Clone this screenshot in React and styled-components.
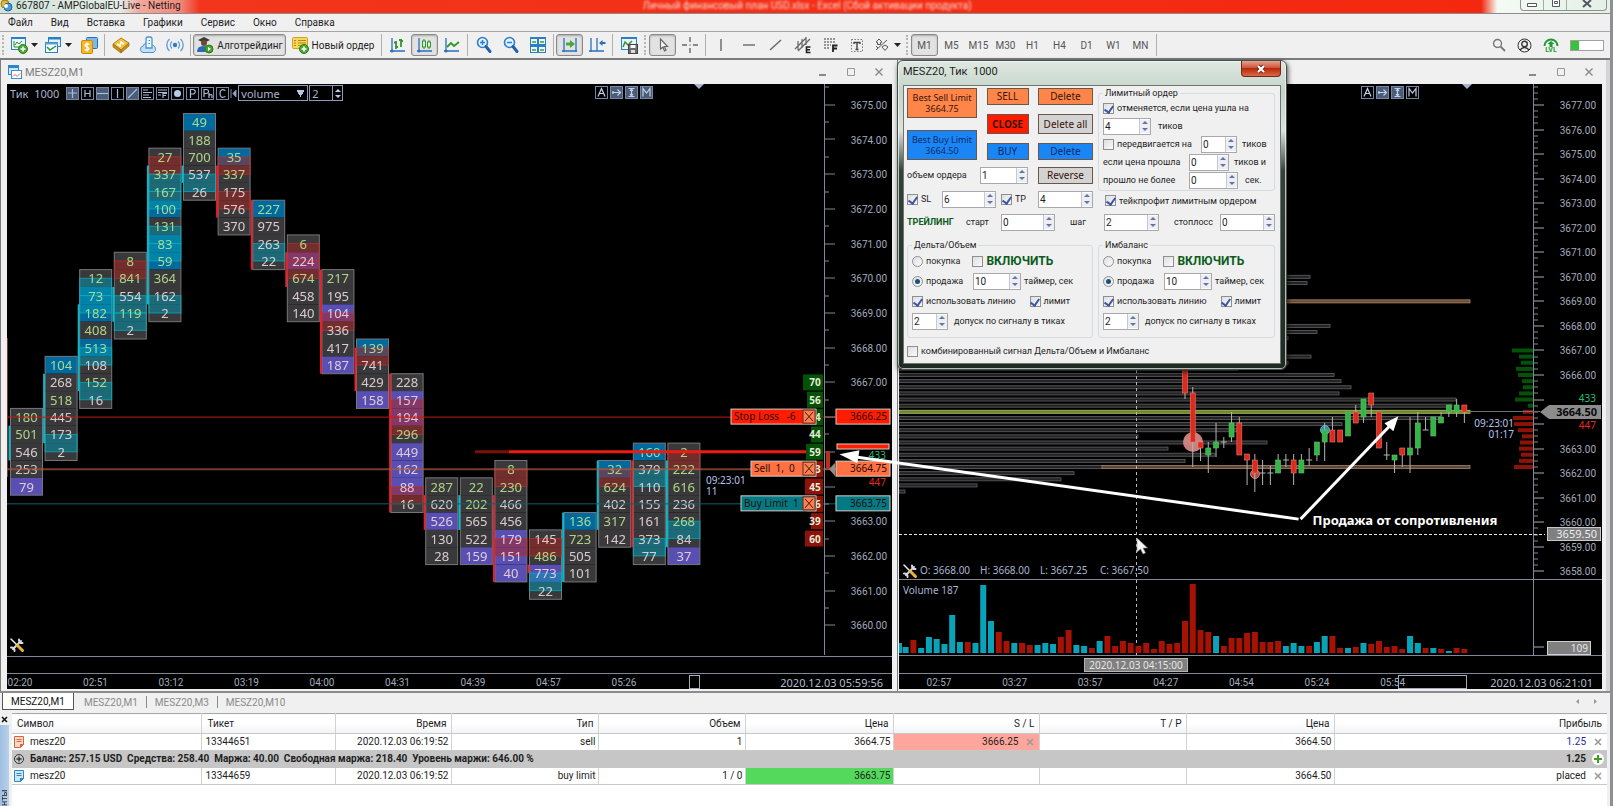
import React, { useId } from 'react';
import styled, { createGlobalStyle, css, ThemeProvider } from 'styled-components';

const theme = {
	colors: {
		chrome: '#f0f0f0',
		line: '#a6a6a6',
		axis: '#7f8799',
		axisText: '#a3abbd',
		ink: '#1e1e1e',
		orange: '#ff8548',
		blue: '#1a86f5',
		red: '#ff1c00',
		cyan: '#08a3b8',
		darkRed: '#a61204'
	},
	ui: "Roboto, 'Noto Sans', sans-serif",
	chart: "'Noto Sans', 'Open Sans', sans-serif"
};

/* ---------- chart data ---------- */

// g / w: text tone, b / p: cell fill (blue / purple), top: price of the first cell
const CLUSTERS = [
	{ top: 3666, cells: '180g 501g 546w 253w 79wp', side: ['c', 0.5, 2.5] },
	{ top: 3667.5, cells: '104gb 268w 518g 445w 173w 2w', side: ['c', 0.5, 4.5], teal: [4] },
	{ top: 3670, cells: '12g 73gb 182gb 408g 513gb 108w 152g 16w', side: ['c', 1.5, 6.5], teal: [0, 1, 4, 6] },
	{ top: 3670.5, cells: '8g 841g 554w 119g 2w', side: ['c', 1.5, 3.5], red: [0], teal: [2, 3] },
	{
		top: 3673.5,
		cells: '27g 337g 167g 100gb 131g 83gb 59gb 364g 162w 2w',
		side: ['c', 0.5, 8.5],
		red: [0],
		teal: [1, 2, 4, 5, 8]
	},
	{ top: 3674.5, cells: '49gb 188g 700g 537w 26w', side: ['c', 2.5, 3.5], teal: [3] },
	{ top: 3673.5, cells: '35gb 337g 175w 576w 370w', side: ['r', 0.5, 3.5], red: [0, 2] },
	{ top: 3672, cells: '227gb 975w 263w 22w', side: ['r', -0.5, 3.5], teal: [2] },
	{ top: 3671, cells: '6g 224wp 674g 458w 140w', side: ['r', 0.5, 2.5], red: [0, 1] },
	{ top: 3670, cells: '217g 195w 104wp 336w 417w 187wp', side: ['r', -0.5, 5.5], red: [2] },
	{ top: 3668, cells: '139gb 741w 429w 158wp', side: ['r', 0, 2.5], red: [0] },
	{ top: 3667, cells: '228w 157wp 194wp 296g 449wp 162wp 88wp 16w', side: ['r', -0.5, 7.5], red: [1, 2, 6] },
	{ top: 3664, cells: '287g 620w 526wp 130w 28w', side: ['r', 0.5, 2.5] },
	{ top: 3664, cells: '22g 202g 565w 522w 159wp', side: ['c', 0.5, 2.5] },
	{ top: 3664.5, cells: '8g 230g 466w 456w 179wp 151wp 40wp', side: ['r', 1.5, 6.5], red: [0, 4] },
	{ top: 3662.5, cells: '145w 486g 773wp 22w', side: ['r', 1.5, 2], red: [0], teal: [2] },
	{ top: 3663, cells: '136gb 723g 505w 101w', side: ['c', -0.5, 3.5] },
	{ top: 3664.5, cells: '32gb 624g 402w 317g 142w', side: ['c', -0.5, 3.5], red: [0] },
	{ top: 3665, cells: '160gb 379w 110w 155w 161w 373w 77w', side: ['r', 0.5, 5.5], teal: [1, 5] },
	{ top: 3665, cells: '2g 222g 616g 236w 268g 84w 37wp', side: ['c', 0.5, 5.5], red: [0], teal: [4] }
];

// price, volume, bar width
const LADDER = [
	[3667, 70, 20],
	[3666.5, 56, 16],
	[3666, 44, 13],
	[3665.5, 44, 12],
	[3665, 59, 17],
	[3664.5, 43, 13],
	[3664, 45, 18],
	[3663.5, 46, 16],
	[3663, 39, 12],
	[3662.5, 60, 18]
];

// row offset from 3666.00 in quarter points, right edge
const PROFILE = [
	[-16, 411], [-15, 408], [-8, 431], [-7, 418], [-6, 389], [-3, 412], [-2, 389], [-1, 339],
	[0, 435], [1, 442], [2, 452], [3, 440], [4, 557], [5, 553], [7, 541], [8, 443], [9, 338],
	[10, 239], [11, 368], [12, 269], [13, 316], [14, 286], [15, 204], [16, 175], [17, 162], [18, 78], [19, 6]
];

const DEPTH = [21, 14, 12, 17, 15, 11, 10, 14, 18, 5, 10, 20, 19, 15, 11, 13, 14, 12, 14, 19];

// kind, body top, body bottom, wick top, wick bottom
const CANDLES = [
	['r', 280, 309, 280, 315], ['r', 309, 358, 303, 383], ['r', 358, 364, 358, 377], ['g', 364, 371, 358, 389],
	['g', 358, 364, 339, 373], ['x', 358, 358, 353, 364], ['g', 339, 353, 328, 358], ['r', 339, 371, 333, 371],
	['r', 370, 376, 370, 401], ['r', 376, 389, 370, 408], ['x', 389, 389, 376, 401], ['x', 389, 389, 382, 401],
	['g', 376, 389, 370, 389], ['x', 376, 376, 370, 383], ['r', 376, 389, 370, 401], ['g', 376, 389, 370, 389],
	['x', 376, 376, 364, 382], ['g', 358, 371, 358, 377], ['g', 346, 358, 339, 377], ['r', 346, 358, 333, 358],
	['r', 346, 358, 346, 358], ['g', 328, 352, 328, 352], ['r', 328, 339, 321, 339], ['g', 315, 333, 315, 339],
	['r', 309, 321, 309, 333], ['r', 328, 364, 328, 364], ['x', 371, 371, 358, 376], ['g', 371, 376, 371, 389],
	['r', 364, 371, 364, 383], ['g', 364, 371, 333, 389], ['g', 339, 364, 328, 371], ['x', 346, 346, 333, 346],
	['g', 333, 352, 333, 352], ['g', 333, 339, 328, 339], ['g', 321, 328, 321, 333], ['g', 321, 328, 315, 333],
	['r', 321, 328, 321, 339]
];

const VOLUME =
	'10c 6c 13r 5c 16c 14c 9c 38c 11c 11r 10c 68c 32c 21r 12r 10c 10r 8r 8c 10c 9c 16r 23r 8c 7c 5r 12c 17r 7r 12r 10r 7r 10r 4r 12r 9r 10r 32r 69r 23r 21r 17c 7r 15r 15r 20r 21r 11r 11r 12r 7c 10c 7c 7r 11c 17c 17r 5r 5c 6r 10c 9r 12r 6r 7r 4r 17c 10c 5r 5c 4r 2c 5r 4r';

const range = (from, to) => Array.from({ length: to - from + 1 }, (_, i) => from + i);

/* ---------- charts ---------- */

const STEP = 34.7;
const leftY = (price) => 298.4 + (3667 - price) * STEP;

function Cluster({ index, top, cells, side, red = [], teal = [] }) {
	const x = 3.5 + 34.6 * index;
	const h = STEP / 2;
	const y = leftY(top);
	const list = cells.split(' ');
	const fills = { b: '#006a9e', p: '#594fb2' };
	return (
		<g>
			{list.map((c, i) => (
				<rect key={i} x={x} y={y - h / 2 + i * h} width="32" height={h} fill={fills[c[c.length - 1]] || '#39393b'} />
			))}
			<rect x={x} y={y - h / 2} width="32" height={h * list.length} fill="none" stroke="#77777a" />
			{red.map((r) => (
				<rect key={r} x={x} y={y + r * h} width="32" height={h} fill="rgba(172,34,32,.5)" stroke="rgba(190,50,50,.7)" />
			))}
			{teal.map((r) => (
				<rect key={r} x={x} y={y + r * h} width="32" height={h} fill="rgba(0,154,180,.5)" stroke="rgba(0,180,195,.7)" />
			))}
			{list.map((c, i) => (
				<CellText key={i} x={x + 16} y={y + i * h + 5} $green={c.includes('g')}>
					{parseInt(c, 10)}
				</CellText>
			))}
			<rect x={x - 2} y={y + side[1] * h} width="2" height={(side[2] - side[1]) * h} fill={side[0] === 'c' ? '#12b4c6' : '#e3232f'} />
		</g>
	);
}

// row is the cluster row the tag sits on, price is the order price
function OrderLabel({ x, row, price, text, fill }) {
	const y = leftY(row);
	return (
		<g>
			<rect x={x} y={y - 8} width={809 - x} height="15" fill={fill} stroke="#d6cfcb" />
			<rect x="796" y={y - 7} width="12" height="13" fill="#ff7f50" stroke="#5a2a1a" />
			<path d={`M798 ${y - 5}l8 9m0 -9l-8 9`} stroke="#3a1a10" />
			<OrderText x={x + 3} y={y + 3}>{text}</OrderText>
			<rect x="829" y={y - 8} width="54" height="15" fill={fill} stroke="#d6cfcb" />
			<OrderText x="880" y={y + 3} textAnchor="end">{price.toFixed(2)}</OrderText>
		</g>
	);
}

function Wrench({ x, y }) {
	return (
		<g transform={`translate(${x} ${y})`} fill="none" strokeLinecap="round">
			<path d="M3 11L11 3" stroke="#d8dde2" strokeWidth="2" />
			<path d="M9 1.5a3 3 0 0 0 3.5 3.5M1 9.5a3 3 0 0 1 3.5 3.5" stroke="#d8dde2" strokeWidth="2" />
			<path d="M1 1l6 6" stroke="#e9edf0" strokeWidth="1.5" />
			<path d="M7.5 7.5l5 5" stroke="#e9b23c" strokeWidth="3" />
		</g>
	);
}

function LeftChart() {
	const times = ['02:20', '02:51', '03:12', '03:19', '04:00', '04:31', '04:39', '04:57', '05:26'];
	return (
		<Plot viewBox="0 0 885 605">
			<rect x="0" y="254" width="1" height="139" fill="#6e3a3a" />
			<path d="M687 0h10l-5 5z" fill="#a8b4d0" />
			{CLUSTERS.map((c, i) => (
				<Cluster key={i} index={i} {...c} />
			))}
			<path d={`M0 ${leftY(3666)}H829`} stroke="#c01c14" />
			<path d={`M0 ${leftY(3664.5)}H829`} stroke="#a8583f" strokeWidth="2" opacity=".7" />
			<path d={`M0 ${leftY(3663.5)}H829`} stroke="#126066" />
			<path d={`M468 ${leftY(3665)}H502`} stroke="#7c1008" strokeWidth="3" />
			<path d={`M502 ${leftY(3665)}H815`} stroke="#ee1c10" strokeWidth="3" />
			{LADDER.map(([p, n, w]) => (
				<g key={p}>
					<rect x={816 - w} y={leftY(p) - 8} width={w} height="16" fill={p >= 3665 ? '#045204' : '#8e1206'} />
					<LadderText x="808" y={leftY(p) + 4}>{n}</LadderText>
				</g>
			))}
			<path d="M817.5 0V571" stroke={theme.colors.axis} />
			{range(3660, 3675).map((p) => (
				<path key={p} d={`M818 ${Math.round(leftY(p))}h10M818 ${Math.round(leftY(p + 0.5))}h4`} stroke={theme.colors.axis} />
			))}
			{range(3660, 3675)
				.filter((p) => ![3664, 3665, 3666].includes(p))
				.map((p) => (
					<AxisText key={p} x="880" y={leftY(p) + 4} textAnchor="end">
						{p.toFixed(2)}
					</AxisText>
				))}
			<rect x="830" y="360" width="52" height="5" fill={theme.colors.red} stroke="#d6cfcb" />
			<SmallText x="879" y="375" textAnchor="end" fill="#1fbf74">433</SmallText>
			<SmallText x="879" y="402" textAnchor="end" fill="#e02a20">447</SmallText>
			<path d="M819 367h4v18h-4z" fill="#b8301c" />
			<path d="M822 385l6 -6v13z" fill="#9a8a86" />
			<OrderLabel x={724} row={3666} price={3666.25} text="Stop Loss   -6" fill={theme.colors.red} />
			<OrderLabel x={744} row={3664.5} price={3664.75} text="Sell  1,  0" fill="#ff7043" />
			<OrderLabel x={734} row={3663.5} price={3663.75} text="Buy Limit  1" fill="#027a84" />
			<SmallText x="699" y="400" fill="#b4c6ea">09:23:01</SmallText>
			<SmallText x="699" y="411" fill="#b4c6ea">11</SmallText>
			<Wrench x={3} y={554} />
			<path d="M0 572.5H885M0 589.5H885" stroke={theme.colors.axis} />
			{times.map((t, i) => (
				<AxisText key={t} x={13 + 75.5 * i} y="602" textAnchor="middle">{t}</AxisText>
			))}
			<rect x="682.5" y="591.5" width="10" height="13" fill="none" stroke={theme.colors.axisText} />
			<DateText x="876" y="603" textAnchor="end">2020.12.03 05:59:56</DateText>
		</Plot>
	);
}

const Q = 6.135;
const rightY = (price) => 291 + (3666 - price) * Q * 4;

function Candle({ k, data: [kind, top, bottom, wickTop, wickBottom] }) {
	const x = 286 + 7.76 * k;
	return (
		<g>
			<path d={`M${x} ${wickTop}V${wickBottom}`} stroke="#b4b4b4" />
			{kind === 'x' ? (
				<path d={`M${x - 3} ${top}h6`} stroke="#b4b4b4" />
			) : (
				<rect
					x={x - 2.5}
					y={top}
					width="5"
					height={bottom - top}
					fill={kind === 'g' ? '#35b548' : '#dc2a1c'}
					stroke={kind === 'g' ? '#5ec46a' : '#ee7a6c'}
					strokeWidth=".6"
				/>
			)}
		</g>
	);
}

function RightChart() {
	const times = ['02:57', '03:27', '03:57', '04:27', '04:54', '05:24', '05:54'];
	const ohlc = ['O: 3668.00', 'H: 3668.00', 'L: 3667.25', 'C: 3667.50'];
	return (
		<Plot viewBox="0 0 703 605">
			<path d="M563 0h10l-5 5z" fill="#a8b4d0" />
			{PROFILE.map(([row, w]) => (
				<rect key={row} x="0" y={289.5 + row * Q} width={w} height="3" fill="#232325" stroke="#58585a" strokeWidth=".9" />
			))}
			<rect x="0" y={291 - 12 * Q - 1.5} width="571" height="3" fill="#6a4a33" stroke="#b5906f" strokeWidth=".8" />
			<rect x="0" y={291 + 6 * Q - 1.5} width="571" height="3" fill="#6c8238" stroke="#a3bd58" strokeWidth=".9" />
			<rect x="203" y={291 + 15 * Q - 1.5} width="368" height="3" fill="#5c4636" stroke="#957b66" strokeWidth=".9" />
			<circle cx="294" cy="358" r="10" fill="#dc8f8c" opacity=".9" />
			<circle cx="356" cy="390" r="4.5" fill="#a8504a" stroke="#d27a74" />
			<circle cx="426" cy="346" r="4.5" fill="#2f8fa3" stroke="#62b6c6" />
			{CANDLES.map((c, k) => (
				<Candle key={k} k={k} data={c} />
			))}
			{DEPTH.map((w, i) => (
				<rect key={i} x={634 - w} y={289 + (i - 4) * Q} width={w} height="4" fill={i < 10 ? '#04520a' : '#8e1206'} />
			))}
			<path d="M634.5 0V571" stroke={theme.colors.axis} />
			{range(3658, 3677).map((p) => (
				<g key={p}>
					<path d={`M635 ${Math.round(rightY(p))}h10`} stroke={theme.colors.axisText} />
					{[0.25, 0.5, 0.75].map((d) => (
						<path key={d} d={`M635 ${Math.round(rightY(p + d))}h4`} stroke={theme.colors.axis} />
					))}
					{p !== 3664 && p !== 3665 && (
						<AxisText x="697" y={rightY(p) + 4} textAnchor="end">{p.toFixed(2)}</AxisText>
					)}
				</g>
			))}
			<path d="M571 327.5H641" stroke="#6d7078" />
			<path d="M641 328l9 -7H702v14H650z" fill="#8c8c8c" />
			<TagText x="698" y="332" textAnchor="end">3664.50</TagText>
			<SmallText x="697" y="318" textAnchor="end" fill="#1fbf74">433</SmallText>
			<SmallText x="697" y="345" textAnchor="end" fill="#e02a20">447</SmallText>
			<SmallText x="615" y="343" textAnchor="end" fill="#b4c6ea">09:23:01</SmallText>
			<SmallText x="615" y="354" textAnchor="end" fill="#b4c6ea">01:17</SmallText>
			<path d="M0 450.5H646" stroke="#e8e8e8" strokeDasharray="3 2" />
			<path d="M237.5 280V571" stroke="#b8b8b8" strokeDasharray="3 3" />
			<rect x="648.5" y="443.5" width="53" height="13" fill="#808080" stroke="#c8c8c8" />
			<TagText x="698" y="454" textAnchor="end" $light>3659.50</TagText>
			<path d="M238 454v14l3.5 -3l2.5 5l2.5 -1.2l-2.5 -4.8h4.5z" fill="#f4f4f4" stroke="#888" strokeWidth=".6" />
			<Wrench x={4} y={480} />
			{ohlc.map((t, i) => (
				<SmallText key={t} x={21 + 60 * i} y="490" fill="#a9b6d2">{t}</SmallText>
			))}
			<path d="M0 495.5H703M0 571.5H703M0 589.5H703" stroke={theme.colors.axis} />
			<SmallText x="4" y="510" fill="#a9b6d2">Volume 187</SmallText>
			{VOLUME.split(' ').map((v, i) => {
				const h = parseInt(v, 10);
				return (
					<rect key={i} x={Math.max(0, 286 + 7.76 * (i - 37) - 3)} y={569 - h} width={i ? 6 : 3} height={h} fill={v.endsWith('c') ? theme.colors.cyan : theme.colors.darkRed} />
				);
			})}
			<path d="M635 563h10" stroke={theme.colors.axisText} />
			<rect x="648.5" y="557.5" width="43" height="13" fill="#808080" stroke="#d0d0d0" />
			<SmallText x="689" y="568" textAnchor="end" fill="#e6e6e6">109</SmallText>
			<rect x="185.5" y="574.5" width="103" height="13" fill="#808080" stroke="#b4b4b4" />
			<SmallText x="237" y="585" textAnchor="middle" fill="#e6e6e6">2020.12.03 04:15:00</SmallText>
			{times.map((t, i) => (
				<AxisText key={t} x={40 + 75.6 * i} y="602" textAnchor="middle">{t}</AxisText>
			))}
			<rect x="499.5" y="591.5" width="68" height="13" fill="none" stroke={theme.colors.axisText} />
			<DateText x="694" y="603" textAnchor="end">2020.12.03 06:21:01</DateText>
		</Plot>
	);
}

const MODES = [
	['A', 'Auto', <path d="M3 10.500L6.500 2.500L10 10.500M4.500 7.500h4" />],
	['S', 'Shift', <path d="M2 6.500h8M7.500 3.500l3 3l-3 3M3 5v3" />],
	['I', 'Scale', <path d="M6.500 3v7M3.500 2.500h6M3.500 10.500h6M5 5l1.500 -2l1.500 2M5 8l1.500 2l1.500 -2" />],
	['M', 'Magnet', <path d="M3 10.500V2.500L6.500 7L10 2.500v8" />]
];

function ModeButtons({ right, on }) {
	return (
		<Modes $right={right}>
			{MODES.map(([m, title, glyph]) => (
				<MiniButton key={m} aria-label={title} $on={on.includes(m)}>
					<svg width="11" height="11" viewBox="1 1 11 11" fill="none" stroke="#c3cfe4" strokeWidth="1.2">{glyph}</svg>
				</MiniButton>
			))}
		</Modes>
	);
}

function ChartWindow({ children, title }) {
	return (
		<Window>
			<WindowBar>
				<svg width="14" height="14" viewBox="0 0 14 14">
					<rect x=".5" y=".5" width="10" height="9" fill="#cfe6f8" stroke="#2c86cc" />
					<path d="M0 1.500h11" stroke="#2c86cc" strokeWidth="3" />
					<rect x="3.500" y="5.500" width="10" height="8" fill="#fff" stroke="#3d8fd0" />
					<path d="M5 11.500l2 -2l2 2l3 -3" fill="none" stroke="#e2663a" />
				</svg>
				<span>{title}</span>
				<WindowTools>
					<button aria-label="Свернуть"><svg width="10" height="10"><path d="M1 8h7" stroke="#888" strokeWidth="2" /></svg></button>
					<button aria-label="Развернуть"><svg width="10" height="10"><path d="M1.500 1.500h7v7h-7z" fill="none" stroke="#999" /></svg></button>
					<button aria-label="Закрыть"><svg width="10" height="10"><path d="M1.500 1.500l7 7m0 -7l-7 7" stroke="#888" strokeWidth="1.400" /></svg></button>
				</WindowTools>
			</WindowBar>
			<Canvas>{children}</Canvas>
		</Window>
	);
}

function ChartTools() {
	const items = [
		['cross', 'M2 6h9M6.500 2v9', true],
		['h', 'M4 3v7M9 3v7M4 6.500h5'],
		['hline', 'M1 6.500h11', true],
		['vline', 'M6.500 2v9'],
		['trend', 'M2 11L11 2', true],
		['levels', 'M2 3h5M2 5.500h9M2 8h6M2 10.500h8'],
		['fibo', 'M2 3h9M2 5.500h9M2 8h3M7 11V6.500h4M7 8.500h3'],
		['dot', ''],
		['p', 'M4.500 11V2.500h2.500a2 2 0 0 1 0 4.500h-2.500'],
		['ph', 'M3 10V2.500h2.500a2 2 0 0 1 0 4h-2.500M8 6v5M8 8.500q3 -2 3 0v2.500'],
		['c', 'M9.500 3.500Q4 1 4 6.500T9.500 9.500']
	];
	return (
		<Tools>
			<span>Тик  1000</span>
			<MiniGroup>
				{items.map(([id, d, on]) => (
					<MiniButton key={id} aria-label={id} $on={on}>
						<svg width="11" height="11" viewBox="1 1 11 11">
							{id === 'dot' ? <circle cx="6.500" cy="6.500" r="3.500" fill="#bccbe4" /> : <path d={d} fill="none" stroke="#a9bbd8" strokeWidth="1.200" />}
						</svg>
					</MiniButton>
				))}
			</MiniGroup>
			<svg width="7" height="13"><path d="M1 2v9M6 3L3 6.500L6 10z" stroke="#7d8ba6" fill="#a9bbd8" /></svg>
			<ModeSelect aria-label="Режим" defaultValue="volume">
				<option>volume</option>
			</ModeSelect>
			<Stepper>
				<input aria-label="Шаг" defaultValue="2" />
				<Spin $dark><button aria-label="Больше" /><button aria-label="Меньше" /></Spin>
			</Stepper>
		</Tools>
	);
}

/* ---------- order dialog ---------- */

function NumberField({ value, w, label, id }) {
	return (
		<Field $w={w}>
			<input id={id} aria-label={label} defaultValue={value} />
			<Spin><button aria-label="Больше" /><button aria-label="Меньше" /></Spin>
		</Field>
	);
}

function Check({ children, on, type = 'checkbox', name, big }) {
	const id = useId();
	return (
		<CheckWrap>
			<Tick id={id} type={type} name={name} defaultChecked={on} />
			<CheckLabel htmlFor={id} $big={big}>{children}</CheckLabel>
		</CheckWrap>
	);
}

function SignalGroup({ title }) {
	return (
		<Group $tall>
			<legend>{title}</legend>
			<Row $h={20} $gap={12}>
				<Check type="radio" name={title}>покупка</Check>
				<Check big>ВКЛЮЧИТЬ</Check>
			</Row>
			<Row $h={20} $gap={3}>
				<RadioSlot><Check type="radio" name={title} on>продажа</Check></RadioSlot>
				<NumberField value="10" w={48} label="Таймер" />
				<span>таймер, сек</span>
			</Row>
			<Row $h={20} $gap={14}>
				<Check on>использовать линию</Check>
				<Check on>лимит</Check>
			</Row>
			<Row $h={20} $gap={6}>
				<NumberField value="2" w={36} label="Допуск" />
				<span>допуск по сигналу в тиках</span>
			</Row>
		</Group>
	);
}

function OrderDialog() {
	return (
		<Dialog>
			<DialogBar>
				<span>MESZ20, Тик  1000</span>
				<CloseButton aria-label="Закрыть">
					<svg width="12" height="10"><path d="M3 2l6 6m0 -6l-6 6" stroke="#6a2a20" strokeWidth="4" /><path d="M3 2l6 6m0 -6l-6 6" stroke="#fff" strokeWidth="2.200" /></svg>
				</CloseButton>
			</DialogBar>
			<Client>
				<Pair>
					<Stack $gap={6}>
						<Orders>
							<OrderColumn $w={70}>
								<OrderButton $h={30} $tone="orange">Best Sell Limit<br />3664.75</OrderButton>
								<OrderButton $h={30} $tone="blue">Best Buy Limit<br />3664.50</OrderButton>
							</OrderColumn>
							<OrderColumn $w={42}>
								<OrderButton $tone="orange">SELL</OrderButton>
								<OrderButton $h={20} $tone="red">CLOSE</OrderButton>
								<OrderButton $tone="blue">BUY</OrderButton>
							</OrderColumn>
							<OrderColumn $w={55}>
								<OrderButton $tone="orange">Delete</OrderButton>
								<OrderButton $h={20}>Delete all</OrderButton>
								<OrderButton $tone="blue">Delete</OrderButton>
							</OrderColumn>
						</Orders>
						<Row $h={18} $gap={10}>
							<Spread $w={121}>
								<label htmlFor="volume">объем ордера</label>
								<NumberField id="volume" value="1" w={48} />
							</Spread>
							<OrderButton $w={55}>Reverse</OrderButton>
						</Row>
						<Row $h={18} $gap={5}>
							<Spread $w={89}>
								<Check on>SL</Check>
								<NumberField value="6" w={54} label="SL" />
							</Spread>
							<Spread $w={92}>
								<Check on>TP</Check>
								<NumberField value="4" w={55} label="TP" />
							</Spread>
						</Row>
					</Stack>
					<Stack $gap={1}>
						<Group>
							<legend>Лимитный ордер</legend>
							<Row $h={18}><Check on>отменяется, если цена ушла на</Check></Row>
							<Row $h={18} $gap={7}>
								<NumberField value="4" w={48} label="Отмена, тиков" />
								<span>тиков</span>
							</Row>
							<Row $h={18} $gap={5}>
								<Spread $w={134}>
									<Check>передвигается на</Check>
									<NumberField value="0" w={36} label="Сдвиг" />
								</Spread>
								<span>тиков</span>
							</Row>
							<Row $h={18} $gap={5}>
								<Spread $w={126}>
									<label htmlFor="passed">если цена прошла</label>
									<NumberField id="passed" value="0" w={40} />
								</Spread>
								<span>тиков и</span>
							</Row>
							<Row $h={18} $gap={7}>
								<Spread $w={135}>
									<label htmlFor="limit">прошло не более</label>
									<NumberField id="limit" value="0" w={49} />
								</Spread>
								<span>сек.</span>
							</Row>
						</Group>
						<Indent $h={17}><Check on>тейкпрофит лимитным ордером</Check></Indent>
					</Stack>
				</Pair>
				<Row $h={18} $gap={15}>
					<Spread $w={148}>
						<Trailing>ТРЕЙЛИНГ</Trailing>
						<label htmlFor="start">старт</label>
						<NumberField id="start" value="0" w={54} />
					</Spread>
					<Spread $w={89}>
						<label htmlFor="step">шаг</label>
						<NumberField id="step" value="2" w={55} />
					</Spread>
					<Spread $w={101}>
						<label htmlFor="stop">стоплосс</label>
						<NumberField id="stop" value="0" w={55} />
					</Spread>
				</Row>
				<Pair $top={5}>
					<SignalGroup title="Дельта/Объем" />
					<SignalGroup title="Имбаланс" />
				</Pair>
				<Row $h={18}><Check>комбинированный сигнал Дельта/Объем и Имбаланс</Check></Row>
			</Client>
		</Dialog>
	);
}

/* ---------- toolbar ---------- */

const ICONS = {
	newChart: (
		<>
			<rect x="1.500" y="1.500" width="14" height="12" fill="#eaf5fd" stroke="#2b7fc4" />
			<path d="M1 2h15" stroke="#2b7fc4" strokeWidth="2" />
			<path d="M4 5v6h9M5 9l2 -3l2 2l3 -3" fill="none" stroke="#2f8f2f" />
			<circle cx="13" cy="13" r="4.500" fill="#4aa82e" stroke="#2b7d18" />
			<path d="M10.500 13h5M13 10.500v5" stroke="#fff" strokeWidth="1.600" />
		</>
	),
	profiles: (
		<>
			<rect x="4.500" y="1.500" width="12" height="9" fill="#e4f2fc" stroke="#2b7fc4" />
			<path d="M4 2.500h13" stroke="#2b7fc4" strokeWidth="2" />
			<rect x="1.500" y="6.500" width="12" height="10" fill="#f2fafe" stroke="#2b7fc4" />
			<path d="M1 7.500h13" stroke="#58a5de" strokeWidth="2" />
			<path d="M3 11l3 3l6 -4" fill="none" stroke="#2f9a2f" strokeWidth="1.500" />
		</>
	),
	market: (
		<>
			<rect x="6.500" y="1.500" width="11" height="11" rx="1" fill="#7db8ea" stroke="#2670b8" />
			<rect x="1.500" y="4.500" width="11" height="13" rx="1" fill="#f5b727" stroke="#c98a0c" />
			<path d="M9.500 8.500q-2.500 -1.500 -4 0t1.500 2.500t1.500 2.500t-4 0M7 6.500v9" fill="none" stroke="#fff" strokeWidth="1.300" />
		</>
	),
	book: (
		<>
			<path d="M1 8l8 -6l8 5l-8 7z" fill="#f3c340" stroke="#b27f14" />
			<path d="M1 8v3l8 6v-3zM9 14v3l8 -7V7z" fill="#c98c1c" stroke="#9c6d10" strokeWidth=".7" />
			<path d="M5 8l3 2l1 -4l3 2" fill="none" stroke="#fff" strokeWidth="1.600" />
		</>
	),
	cloud: (
		<>
			<path d="M4 16.500a3.200 3.200 0 0 1 0 -6.300a4 4 0 0 1 7.500 -.7a3.500 3.500 0 0 1 2.500 7z" fill="#c5e0f6" stroke="#4b93d4" />
			<path d="M7 12V3a2 2 0 0 1 2 -2h2a2 2 0 0 1 2 2v9z" fill="#eef6fd" stroke="#4b93d4" strokeWidth="1.300" />
			<path d="M9.500 4.500h1.500M9.500 7.500h1.500" stroke="#4b93d4" />
		</>
	),
	signal: (
		<>
			<circle cx="9" cy="9" r="2.200" fill="#2f78cc" />
			<path d="M6 5.500a5 5 0 0 0 0 7M12 5.500a5 5 0 0 1 0 7M3.500 3a8 8 0 0 0 0 12M14.500 3a8 8 0 0 1 0 12" fill="none" stroke="#62a0dc" strokeWidth="1.400" />
		</>
	),
	algo: (
		<>
			<path d="M2 4l6 -3l6 3l-6 3z" fill="#3a3a3a" />
			<circle cx="8" cy="7" r="3" fill="#6b4a32" />
			<path d="M1 16q0 -6 6 -6t6 6z" fill="#2a6ab6" />
			<circle cx="13" cy="13" r="4" fill="#42a52a" stroke="#2b7d18" />
			<path d="M12 11v4l3 -2z" fill="#fff" />
		</>
	),
	order: (
		<>
			<rect x="1.500" y="1.500" width="15" height="11" rx="1" fill="#f7d65c" stroke="#d49f1e" />
			<path d="M3 4.500h2M3 7h2M3 9.500h2M7 4.500h8M7 7h8M7 9.500h5" stroke="#b98715" />
			<circle cx="13" cy="13" r="4.500" fill="#4aa82e" stroke="#2b7d18" />
			<path d="M10.500 13h5M13 10.500v5" stroke="#fff" strokeWidth="1.600" />
		</>
	),
	bars: (
		<>
			<path d="M3 2v14M1 15h15" stroke="#2a6fc0" strokeWidth="1.300" />
			<circle cx="3" cy="15" r="1.500" fill="#2a6fc0" />
			<path d="M7 5v8M5 6.500h2M12 3v8M10 4h2M12 5h2M7 11h2" stroke="#31952b" strokeWidth="1.800" />
		</>
	),
	candles: (
		<>
			<path d="M3 2v14M1 15h15" stroke="#2a6fc0" strokeWidth="1.300" />
			<circle cx="3" cy="15" r="1.500" fill="#2a6fc0" />
			<path d="M8 3v10M13 4v9" stroke="#31952b" />
			<rect x="6.500" y="5" width="3" height="6" fill="#dff0da" stroke="#31952b" />
			<rect x="11.500" y="6" width="3" height="5" fill="#dff0da" stroke="#31952b" />
		</>
	),
	line: (
		<>
			<path d="M3 2v14M1 15h15" stroke="#2a6fc0" strokeWidth="1.300" />
			<circle cx="3" cy="15" r="1.500" fill="#2a6fc0" />
			<path d="M4 11l4 -4l3 3l5 -4" fill="none" stroke="#31952b" strokeWidth="1.800" />
		</>
	),
	zoomIn: (
		<>
			<circle cx="7.500" cy="6.500" r="5" fill="#e3f1fc" stroke="#2f7ecb" strokeWidth="1.600" />
			<path d="M5 6.500h5M7.500 4v5" stroke="#2f7ecb" strokeWidth="1.500" />
			<path d="M11 10.500l4 5" stroke="#2560a4" strokeWidth="3" strokeLinecap="round" />
		</>
	),
	zoomOut: (
		<>
			<circle cx="7.500" cy="6.500" r="5" fill="#e3f1fc" stroke="#2f7ecb" strokeWidth="1.600" />
			<path d="M5 6.500h5" stroke="#2f7ecb" strokeWidth="1.500" />
			<path d="M11 10.500l4 5" stroke="#2560a4" strokeWidth="3" strokeLinecap="round" />
		</>
	),
	tile: (
		<>
			{[[1, 1], [9, 1], [1, 9], [9, 9]].map(([x, y]) => (
				<g key={`${x}${y}`}>
					<rect x={x + 0.5} y={y + 0.5} width="7" height="7" fill="#eef7fd" stroke="#2b7fc4" />
					<path d={`M${x} ${y + 1}h8`} stroke="#2b7fc4" strokeWidth="2" />
					<path d={`M${x + 2} ${y + 5}h4`} stroke="#31952b" strokeWidth="1.400" />
				</g>
			))}
		</>
	),
	scroll: (
		<>
			<path d="M3 2v14M1 15h15M15 2v14" stroke="#2a6fc0" strokeWidth="1.300" />
			<path d="M5 6.500h4V4l5 4l-5 4V9.500h-4z" fill="#49a936" />
		</>
	),
	shift: (
		<>
			<path d="M3 2v14M1 15h15M9 2v13" stroke="#2a6fc0" strokeWidth="1.300" />
			<path d="M11 7l3.500 -3v2h3v2h-3v2z" fill="#2a6fc0" />
		</>
	),
	template: (
		<>
			<rect x="1.500" y="1.500" width="15" height="12" fill="#eaf5fd" stroke="#2b7fc4" />
			<path d="M1 2h16" stroke="#2b7fc4" strokeWidth="2" />
			<path d="M3 11l2 -5l3 3l4 -4" fill="none" stroke="#31952b" strokeWidth="1.500" />
			<rect x="8.500" y="8.500" width="9" height="9" fill="#6c6c70" stroke="#444" />
			<path d="M10.500 9v3h5v-3z" fill="#fff" />
			<path d="M11 17v-3h4v3z" fill="#ddd" />
		</>
	),
	cursor: <path d="M6.500 3v10l2.500 -2l1.500 4l1.500 -.7l-1.500 -3.800h3z" fill="#fff" stroke="#666" strokeWidth="1.200" />,
	crosshair: <path d="M9 1v5M9 12v5M1 9h5M12 9h5M8.500 9h1" stroke="#666" strokeWidth="1.400" />,
	vline: <path d="M8 3v12" stroke="#666" strokeWidth="1.400" />,
	hline: <path d="M3 9h12" stroke="#666" strokeWidth="1.400" />,
	trend: <path d="M3 14L14 4" stroke="#666" strokeWidth="1.400" />,
	channel: (
		<>
			<path d="M1 13L12 2M4 15L16 3M4 5v9M8 3v9M12 1v8" fill="none" stroke="#666" strokeWidth="1.200" />
			<path d="M16.500 11h-4v5.500h4M12.500 13.700h3.500" fill="none" stroke="#222" strokeWidth="1.600" />
		</>
	),
	fibo: (
		<>
			<path d="M3 3h12M3 6h12M3 9h7M3 12h6" stroke="#777" strokeWidth="1.500" strokeDasharray="2 1" />
			<path d="M12 16V9.500h4.500M12 12.500h4" fill="none" stroke="#222" strokeWidth="1.800" />
		</>
	),
	text: (
		<>
			<rect x="3.500" y="3.500" width="11" height="12" fill="none" stroke="#777" strokeDasharray="1.500 1.500" />
			<path d="M6 6.500h6M9 6.500v7M7.500 13.500h3M6 6v2M12 6v2" stroke="#444" strokeWidth="1.400" />
		</>
	),
	objects: (
		<>
			<path d="M3 6l3 -3l3 3l-1.500 .5v2h-3v-2z" fill="none" stroke="#555" />
			<path d="M3 14L14 4" stroke="#555" />
			<path d="M9 11l3 3.500l3 -3.500l-3 -2z" fill="none" stroke="#555" />
			<path d="M3 10l2 2" stroke="#555" />
		</>
	)
};

const Icon = ({ name }) => (
	<svg width="18" height="18" viewBox="0 0 18 18">{ICONS[name]}</svg>
);

const Tool = ({ name, on }) => (
	<ToolButton aria-label={name} $on={on}><Icon name={name} /></ToolButton>
);

const Split = ({ name }) => (
	<SplitBox>
		<ToolButton aria-label={name} $slim><Icon name={name} /></ToolButton>
		<Caret aria-label={`${name} menu`} />
	</SplitBox>
);

function Toolbar() {
	return (
		<Bar>
			<Grip />
			<Split name="newChart" />
			<Split name="profiles" />
			<Tool name="market" />
			<Divider />
			<Tool name="book" />
			<Tool name="cloud" />
			<Tool name="signal" />
			<Divider />
			<ToolButton $on $wide><Icon name="algo" />Алготрейдинг</ToolButton>
			<ToolButton $wide><Icon name="order" />Новый ордер</ToolButton>
			<Divider />
			<Tool name="bars" />
			<Tool name="candles" on />
			<Tool name="line" />
			<Divider />
			<Tool name="zoomIn" />
			<Tool name="zoomOut" />
			<Tool name="tile" />
			<Divider />
			<Tool name="scroll" on />
			<Tool name="shift" />
			<Divider />
			<Tool name="template" />
			<Grip />
			<Tool name="cursor" on />
			<Tool name="crosshair" />
			<Divider />
			{['vline', 'hline', 'trend', 'channel', 'fibo', 'text'].map((n) => (
				<Tool key={n} name={n} />
			))}
			<Split name="objects" />
			<Grip />
			{['M1', 'M5', 'M15', 'M30', 'H1', 'H4', 'D1', 'W1', 'MN'].map((t) => (
				<ToolButton key={t} $on={t === 'M1'} $muted>{t}</ToolButton>
			))}
			<Divider />
			<Status>
				<svg width="14" height="14"><circle cx="5.500" cy="5.500" r="4" fill="none" stroke="#777" strokeWidth="1.400" /><path d="M8.500 8.500l4.500 4.500" stroke="#777" strokeWidth="1.800" /></svg>
				<svg width="15" height="15"><circle cx="7.500" cy="7.500" r="6.500" fill="none" stroke="#333" /><circle cx="7.500" cy="6" r="2.800" fill="none" stroke="#333" strokeWidth="1.400" /><path d="M3 12q4.500 -5 9 0" fill="none" stroke="#333" strokeWidth="1.400" /></svg>
				<Level>
					<svg width="16" height="10"><path d="M1.500 9a6.500 6.500 0 0 1 13 0" fill="none" stroke="#1f9a34" strokeWidth="2" /><path d="M8 4l3.500 3h-2v3h-3v-3h-2z" fill="#1f9a34" /></svg>
					LVL
				</Level>
				<Meter />
			</Status>
		</Bar>
	);
}

/* ---------- terminal ---------- */

const COLUMNS = [
	['Символ', 190],
	['Тикет', 134],
	['Время', 116],
	['Тип', 147],
	['Объем', 147],
	['Цена', 148],
	['S / L', 146],
	['T / P', 147],
	['Цена', 148],
	['Прибыль', 272]
];

const Sheet = ({ color, fill }) => (
	<svg width="12" height="14">
		<path d="M1.500 1.500h9v8l-3 3h-6z" fill={fill} stroke={color} />
		<path d="M3.500 4.500h5M3.500 6.500h5" stroke={color} />
		<path d="M7 13v-4h4z" fill={color} />
	</svg>
);

const Remove = () => (
	<RemoveButton aria-label="Удалить">
		<svg width="8" height="8"><path d="M1 1l6 6m0 -6l-6 6" stroke="#9a9a9a" strokeWidth="1.600" /></svg>
	</RemoveButton>
);

function Terminal() {
	return (
		<Panel>
			<Rail>
				<button aria-label="Закрыть панель">
					<svg width="7" height="7"><path d="M1 1l5 5m0 -5l-5 5" stroke="#111" strokeWidth="1.600" /></svg>
				</button>
				<RailTab>нты</RailTab>
			</Rail>
			<Table>
				<colgroup>
					{COLUMNS.map(([, w], i) => (
						<Col key={i} $share={w} />
					))}
				</colgroup>
				<thead>
					<tr>
						{COLUMNS.map(([c], i) => (
							<th key={i}>{c}</th>
						))}
					</tr>
				</thead>
				<tbody>
					<tr>
						<td><Cell><Sheet color="#d8663c" fill="#fbd9c8" />mesz20</Cell></td>
						<td>13344651</td>
						<td>2020.12.03 06:19:52</td>
						<td>sell</td>
						<td>1</td>
						<td>3664.75</td>
						<Mark $fill="#ffa69c"><Cell $end>3666.25<Remove /></Cell></Mark>
						<td />
						<td>3664.50</td>
						<td><Cell $end><Profit>1.25</Profit><Remove /></Cell></td>
					</tr>
					<Summary>
						<td colSpan="9">
							<Cell>
								<svg width="12" height="12"><circle cx="6" cy="6" r="4.500" fill="none" stroke="#333" /><path d="M3.500 6h5M6 3.500v5" stroke="#333" strokeWidth="1.400" /></svg>
								Баланс: 257.15 USD  Средства: 258.40  Маржа: 40.00  Свободная маржа: 218.40  Уровень маржи: 646.00 %
							</Cell>
						</td>
						<td>
							<Cell $end>
								1.25
								<RemoveButton aria-label="Добавить">
									<svg width="12" height="12"><circle cx="6" cy="6" r="6" fill="#fff" /><path d="M2 6h8M6 2v8" stroke="#3f9f22" strokeWidth="2" /></svg>
								</RemoveButton>
							</Cell>
						</td>
					</Summary>
					<tr>
						<td><Cell><Sheet color="#2f86c0" fill="#cbe8f7" />mesz20</Cell></td>
						<td>13344659</td>
						<td>2020.12.03 06:19:52</td>
						<td>buy limit</td>
						<td>1 / 0</td>
						<Mark $fill="#55d95c">3663.75</Mark>
						<td />
						<td />
						<td>3664.50</td>
						<td><Cell $end>placed<Remove /></Cell></td>
					</tr>
				</tbody>
			</Table>
		</Panel>
	);
}

export default function App() {
	return (
		<ThemeProvider theme={theme}>
			<GlobalStyle />
			<Page>
				<TitleBar>
					<svg width="13" height="12"><circle cx="5" cy="4" r="4" fill="#e9b832" stroke="#a3760e" /><circle cx="8" cy="7" r="4" fill="#4a9ad8" stroke="#1f659e" /><circle cx="6" cy="6" r="2" fill="#fff" /></svg>
					<span>667807 - AMPGlobalEU-Live - Netting</span>
					<Behind>Личный финансовый план USD.xlsx - Excel (Сбой активации продукта)</Behind>
					<Caption>
						<button aria-label="Свернуть"><svg width="12" height="8"><path d="M1.500 3.500h9v3h-9z" fill="#fff" stroke="#556" /></svg></button>
						<button aria-label="Развернуть"><svg width="12" height="8"><path d="M3.500 0v6.500h7v-6.500" fill="#fff" stroke="#556" /><path d="M5.500 1.500h3v2h-3z" fill="none" stroke="#556" /></svg></button>
						<button aria-label="Закрыть"><svg width="12" height="8"><path d="M2 0l8 7m0 -7l-8 7" stroke="#556" strokeWidth="2" /></svg></button>
					</Caption>
				</TitleBar>
				<Menu>
					{['Файл', 'Вид', 'Вставка', 'Графики', 'Сервис', 'Окно', 'Справка'].map((m) => (
						<button key={m}>{m}</button>
					))}
				</Menu>
				<Toolbar />
				<Workspace>
					<ChartWindow title="MESZ20,M1">
						<LeftChart />
						<ChartTools />
						<ModeButtons right="27%" on={['S', 'I', 'M']} />
					</ChartWindow>
					<ChartWindow title="">
						<RightChart />
						<ModeButtons right="26%" on={['S', 'I']} />
					</ChartWindow>
					<OrderDialog />
					<Notes viewBox="0 0 1613 632">
						<path d="M1301 460L852 397" stroke="#fff" strokeWidth="3" />
						<path d="M841 395l20 -4l-2 13z" fill="#fff" />
						<path d="M1303 460L1392 367" stroke="#fff" strokeWidth="3" />
						<path d="M1401 357l-5 15l-9 -8z" fill="#fff" />
						<NoteText x="1315" y="466">Продажа от сопротивления</NoteText>
					</Notes>
				</Workspace>
				<Tabs>
					{['M1', 'M1', 'M3', 'M10'].map((t, i) => (
						<Tab key={i} $on={i === 0}>MESZ20,{t}</Tab>
					))}
					<TabArrows>
						<button aria-label="Назад"><svg width="5" height="7"><path d="M4 1v5l-3 -2.500z" fill="#999" /></svg></button>
						<button aria-label="Вперёд"><svg width="5" height="7"><path d="M1 1v5l3 -2.500z" fill="#999" /></svg></button>
					</TabArrows>
				</Tabs>
				<Terminal />
			</Page>
		</ThemeProvider>
	);
}

const GlobalStyle = createGlobalStyle`
	* { box-sizing: border-box; }
	body { margin: 0; background: #f0f0f0; }
	button, input, select {
		font: inherit;
		color: inherit;
		padding: 0;
		margin: 0;
		border: 0;
		background: none;
	}
	svg { display: block; flex: none; }
`;

const Page = styled.div`
	display: flex;
	flex-direction: column;
	min-height: 100vh;
	border-right: 3px solid #8c8f94;
	background: ${(props) => props.theme.colors.chrome};
	color: ${(props) => props.theme.colors.ink};
	font-family: ${(props) => props.theme.ui};
	font-size: 10px;
`;

const TitleBar = styled.header`
	display: flex;
	align-items: flex-start;
	gap: 3px;
	height: 14px;
	padding-right: 3px;
	line-height: 11px;
	white-space: nowrap;
	border-bottom: 1px solid #8c8c8c;
	background: linear-gradient(90deg, #cfe3d8 0, #e6ece6 120px, #f3a79c 140px, #f08a7c 180px, #f2351c 200px, #f3280f 92%, #f4fbf4 93%, #e4efe6);
`;

const Behind = styled.span`
	flex: 1;
	padding-right: 86px;
	text-align: center;
	color: #ffd8d0;
	filter: blur(1px);
`;

const Caption = styled.div`
	display: flex;
	height: 11px;
	border: 1px solid #8b9491;
	border-top: 0;
	border-radius: 0 0 4px 4px;
	overflow: hidden;

	button {
		width: 23px;
		display: flex;
		justify-content: center;
		border-right: 1px solid #a3aaa8;
	}

	button:last-child {
		width: 39px;
		border: 0;
	}
`;

const Menu = styled.nav`
	display: flex;
	align-items: center;
	gap: 18px;
	height: 18px;
	padding-left: 8px;
	border-bottom: 1px solid ${(props) => props.theme.colors.line};
`;

const Bar = styled.div`
	display: flex;
	align-items: center;
	height: 26px;
	padding-right: 6px;
`;

const Grip = styled.i`
	width: 3px;
	height: 20px;
	margin: 0 2px;
	border-left: 2px dotted #b5b5b5;
`;

const Divider = styled.i`
	width: 1px;
	height: 22px;
	margin: 0 2px;
	background: #b0b0b0;
`;

const ToolButton = styled.button`
	display: flex;
	align-items: center;
	justify-content: center;
	gap: 3px;
	width: ${(props) => (props.$wide ? '93px' : props.$slim ? '24px' : '27px')};
	height: 22px;
	flex: none;
	white-space: nowrap;
	color: ${(props) => (props.$muted ? '#555' : 'inherit')};
	${(props) =>
		props.$on &&
		css`
			border: 1px solid #8a8a8a;
			border-radius: 3px;
			background: #e2e2e2;
			box-shadow: inset 0 1px 2px rgba(0, 0, 0, 0.25);
		`}
`;

const SplitBox = styled.div`
	display: flex;
	align-items: center;
	width: 34px;
`;

const Caret = styled.button`
	width: 7px;
	height: 4px;
	background: #222;
	clip-path: polygon(0 0, 100% 0, 50% 100%);
`;

const Status = styled.div`
	display: flex;
	align-items: center;
	gap: 11px;
	margin-left: auto;
`;

const Level = styled.span`
	display: flex;
	flex-direction: column;
	align-items: center;
	color: #1f9a34;
	font-size: 7px;
	line-height: 6px;
	font-weight: 700;
`;

const Meter = styled.i`
	width: 34px;
	height: 11px;
	border: 1px solid #a0a0a0;
	background: linear-gradient(90deg, #38c23c 26%, #fff 26%);
`;

const Workspace = styled.main`
	position: relative;
	display: grid;
	grid-template-columns: 897fr 713fr;
	border-top: 2px solid #7c7c7c;
	border-bottom: 2px solid #8c8c8c;
`;

const Window = styled.section`
	min-width: 0;
	padding: 0 5px 2px 6px;
	border-left: 1px solid #7c7c7c;

	& + & {
		padding-left: 1px;
		padding-right: 8px;
		box-shadow: inset -4px 0 #d4d4d4;
	}
`;

const WindowBar = styled.header`
	display: flex;
	align-items: center;
	gap: 3px;
	height: 24px;
	padding-left: 1px;
	color: #7d7d7d;
	font-size: 11px;
`;

const WindowTools = styled.div`
	display: flex;
	gap: 18px;
	margin-left: auto;
	padding-right: 8px;
`;

const Canvas = styled.div`
	position: relative;
	background: #000;
`;

const Plot = styled.svg`
	width: 100%;
	height: auto;
	font-family: ${(props) => props.theme.chart};
`;

const CellText = styled.text`
	font-size: 13px;
	text-anchor: middle;
	fill: ${(props) => (props.$green ? '#bfe890' : '#f0dede')};
	opacity: 0.88;
`;

const AxisText = styled.text`
	font-family: ${(props) => props.theme.ui};
	font-size: 10px;
	fill: ${(props) => props.theme.colors.axisText};
`;

const SmallText = styled.text`
	font-size: 10px;
`;

const DateText = styled.text`
	font-size: 11px;
	fill: #b4bccb;
`;

const LadderText = styled.text`
	font-size: 10px;
	font-weight: 700;
	text-anchor: middle;
	fill: #e4ecdc;
`;

const OrderText = styled.text`
	font-size: 10px;
	fill: #2a0c06;
	white-space: pre;
`;

const TagText = styled.text`
	font-size: 11px;
	font-weight: ${(props) => (props.$light ? 400 : 700)};
	fill: ${(props) => (props.$light ? '#ececec' : '#0a0a0a')};
`;

const Notes = styled.svg`
	position: absolute;
	top: 0;
	left: 0;
	width: 100%;
	height: auto;
	pointer-events: none;
`;

const NoteText = styled.text`
	font-family: ${(props) => props.theme.chart};
	font-size: 13px;
	font-weight: 700;
	fill: #fff;
`;

const Tools = styled.div`
	position: absolute;
	top: 1px;
	left: 3px;
	display: flex;
	align-items: center;
	gap: 1px;
	height: 16px;
	color: #a9b6d2;
	font-family: ${(props) => props.theme.chart};
	font-size: 11px;
	white-space: pre;
`;

const MiniGroup = styled.div`
	display: flex;
	gap: 2px;
	padding-left: 6px;
`;

const Modes = styled(MiniGroup)`
	position: absolute;
	top: 2px;
	right: ${(props) => props.$right};
`;

const MiniButton = styled.button`
	display: flex;
	align-items: center;
	justify-content: center;
	width: 13px;
	height: 13px;
	border: 1px solid #7687a5;
	background: ${(props) => (props.$on ? '#4b5c78' : '#000')};
`;

const ModeSelect = styled.select`
	width: 70px;
	height: 16px;
	padding-left: 2px;
	border: 1px solid #8c9ab4;
	appearance: none;
	background: conic-gradient(from -30deg at 50% 100%, #b6c6e2 60deg, transparent 0) no-repeat right 3px center / 7px 7px;
`;

const Stepper = styled.div`
	display: flex;
	width: 34px;
	height: 16px;
	border: 1px solid #8c9ab4;

	input {
		width: 22px;
		padding-left: 2px;
	}
`;

const Spin = styled.span`
	display: grid;
	width: 11px;
	flex: none;
	padding: 1px 0;
	border-left: 1px solid ${(props) => (props.$dark ? '#8c9ab4' : '#c9c9cd')};

	button {
		display: grid;
		place-items: center;
		background: ${(props) => (props.$dark ? 'none' : '#eceef4')};
	}

	button::before {
		content: '';
		border: 3px solid transparent;
		border-top: 0;
		border-bottom: 3px solid ${(props) => (props.$dark ? '#c0cce2' : '#6674a0')};
	}

	button:last-child::before {
		border-top: 3px solid ${(props) => (props.$dark ? '#c0cce2' : '#6674a0')};
		border-bottom: 0;
	}
`;

const Dialog = styled.div`
	position: absolute;
	top: 0;
	left: 897px;
	width: 390px;
	padding: 0 5px 5px;
	border: 1px solid #46504a;
	border-radius: 6px;
	background: linear-gradient(180deg, #dfe8e0 0, #c5d4ca 30px, #dbe2dc 70px, #34423a 110px, #1e2a22);
	box-shadow: 1px 2px 5px rgba(0, 0, 0, 0.7), inset 0 0 0 1px rgba(240, 250, 244, 0.7);
	font-family: ${(props) => props.theme.ui};
	font-size: 9px;
	white-space: nowrap;
`;

const DialogBar = styled.header`
	display: flex;
	justify-content: space-between;
	height: 24px;
	line-height: 22px;
	font-size: 11px;
	white-space: pre;
`;

const CloseButton = styled.button`
	display: flex;
	align-items: center;
	justify-content: center;
	width: 40px;
	height: 16px;
	border: 1px solid #6a2a20;
	border-top: 0;
	border-radius: 0 0 4px 4px;
	background: linear-gradient(#e5a190, #d0543a 45%, #b8280c 50%, #dc6a44);
`;

const Client = styled.div`
	display: flex;
	flex-direction: column;
	gap: 4px;
	padding: 2px 5px 3px 3px;
	border: 1px solid #6d7670;
	background: #f0f0f0;
`;

const Pair = styled.div`
	display: grid;
	grid-template-columns: 186px 177px;
	gap: 5px;
	margin-top: ${(props) => props.$top || 0}px;
`;

const Stack = styled.div`
	display: flex;
	flex-direction: column;
	gap: ${(props) => props.$gap}px;
`;

const Orders = styled.div`
	display: flex;
	justify-content: space-between;
	height: 72px;
`;

const OrderColumn = styled.div`
	display: flex;
	flex-direction: column;
	justify-content: space-between;
	width: ${(props) => props.$w}px;
`;

const OrderButton = styled.button`
	width: ${(props) => (props.$w ? `${props.$w}px` : 'auto')};
	height: ${(props) => props.$h || 17}px;
	border: 1px solid #6b5648;
	background: ${(props) => props.theme.colors[props.$tone] || '#d3d3d3'};
	color: ${(props) => (props.$tone === 'blue' ? '#0c2a66' : '#3a1408')};
	font-family: ${(props) => props.theme.chart};
	font-weight: ${(props) => (props.$tone === 'red' ? 700 : 400)};
	font-size: ${(props) => (props.$h === 30 ? 9 : 10)}px;
	line-height: 11px;
`;

const Row = styled.div`
	display: flex;
	align-items: center;
	gap: ${(props) => props.$gap || 0}px;
	height: ${(props) => props.$h}px;
`;

const Spread = styled.div`
	display: flex;
	align-items: center;
	justify-content: space-between;
	width: ${(props) => props.$w}px;
`;

const Indent = styled(Row)`
	padding-left: 7px;
`;

const Field = styled.span`
	display: flex;
	width: ${(props) => props.$w}px;
	height: 17px;
	flex: none;
	border: 1px solid #a9a9ad;
	background: #fff;

	input {
		flex: 1;
		min-width: 0;
		padding-left: 1px;
		font-size: 10px;
	}
`;

const Group = styled.fieldset`
	min-width: 0;
	margin: 0;
	padding: 0 4px ${(props) => (props.$tall ? 6 : 1)}px;
	border: 1px solid #d5dbe2;
	border-radius: 3px;

	legend {
		height: 11px;
		line-height: 11px;
		padding: 0 2px;
	}
`;

const CheckWrap = styled.span`
	display: inline-flex;
	align-items: center;
	gap: 3px;
`;

const RadioSlot = styled.span`
	width: 58px;
`;

const CheckLabel = styled.label`
	${(props) =>
		props.$big &&
		css`
			color: #0c5c1c;
			font-size: 12px;
			font-weight: 700;
		`}
`;

const Tick = styled.input`
	appearance: none;
	display: grid;
	place-items: center;
	width: 11px;
	height: 11px;
	flex: none;
	border: 1px solid #8e8f8f;
	border-radius: ${(props) => (props.type === 'radio' ? '50%' : 0)};
	background: linear-gradient(135deg, #dcdfe4, #fafafa);

	&:checked::before {
		content: '';
		${(props) =>
			props.type === 'radio'
				? css`
						width: 5px;
						height: 5px;
						border-radius: 50%;
						background: #1c4f7c;
				  `
				: css`
						width: 4px;
						height: 7px;
						margin-bottom: 2px;
						border: solid #3f55a6;
						border-width: 0 2px 2px 0;
						transform: rotate(35deg);
				  `}
	}
`;

const Trailing = styled.b`
	color: #0c5c1c;
`;

const Tabs = styled.div`
	display: flex;
	align-items: flex-start;
	height: 20px;
	padding-left: 2px;
`;

const Tab = styled.button`
	height: ${(props) => (props.$on ? 17 : 12)}px;
	margin-top: ${(props) => (props.$on ? 0 : 3)}px;
	margin-right: ${(props) => (props.$on ? 2 : 0)}px;
	padding: 0 8px;
	color: ${(props) => (props.$on ? '#111' : '#8a8a8a')};
	background: ${(props) => (props.$on ? '#fff' : 'none')};
	border: ${(props) => (props.$on ? '1px solid #555' : '0')};
	border-top: 0;

	& + & + & {
		border-left: 1px solid #8a8a8a;
	}
`;

const TabArrows = styled.div`
	display: flex;
	gap: 13px;
	margin-left: auto;
	padding: 5px 12px 0 0;
`;

const Panel = styled.section`
	flex: 1;
	display: grid;
	grid-template-columns: 12px 1fr;
	align-items: start;
	margin-right: 3px;
	background: #fff;
`;

const Rail = styled.aside`
	display: flex;
	flex-direction: column;
	align-self: stretch;
	background: ${(props) => props.theme.colors.chrome};

	button {
		height: 12px;
		padding-left: 1px;
	}
`;

const RailTab = styled.span`
	flex: 1;
	width: 9px;
	writing-mode: vertical-rl;
	transform: rotate(180deg);
	line-height: 9px;
	background: linear-gradient(90deg, #b9d0ea, #9fbfe2);
	font-size: 9px;
`;

const Table = styled.table`
	width: 100%;
	table-layout: fixed;
	border-collapse: collapse;
	border-top: 1px solid #a9a9a9;

	th,
	td {
		height: 17px;
		padding: 0 3px;
		border-right: 1px solid #d2d2d2;
		border-bottom: 1px solid #c8c8c8;
		text-align: right;
		white-space: pre;
		line-height: 14px;
	}

	th {
		height: 20px;
		padding: 0 5px;
		font-weight: 400;
		background: linear-gradient(#fff 45%, #f1f3f6);
	}

	th:nth-child(-n + 2),
	td:nth-child(-n + 2) {
		text-align: left;
	}

	td:first-child {
		padding-left: 1px;
	}

	tr > :last-child {
		border-right: 0;
		text-align: right;
	}
`;

const Col = styled.col`
	width: ${(props) => (props.$share / 15.95).toFixed(2)}%;
`;

const Cell = styled.div`
	display: flex;
	align-items: center;
	justify-content: ${(props) => (props.$end ? 'flex-end' : 'flex-start')};
	gap: ${(props) => (props.$end ? 6 : 5)}px;
	height: 14px;
`;

const RemoveButton = styled.button`
	display: flex;
	justify-content: center;
	width: 12px;
`;

const Mark = styled.td`
	background: ${(props) => props.$fill};
`;

const Profit = styled.span`
	color: #2a2a98;
`;

const Summary = styled.tr`
	background: #c6c6c6;
	font-weight: 700;

	&& td {
		border-color: #c6c6c6;
	}
`;
